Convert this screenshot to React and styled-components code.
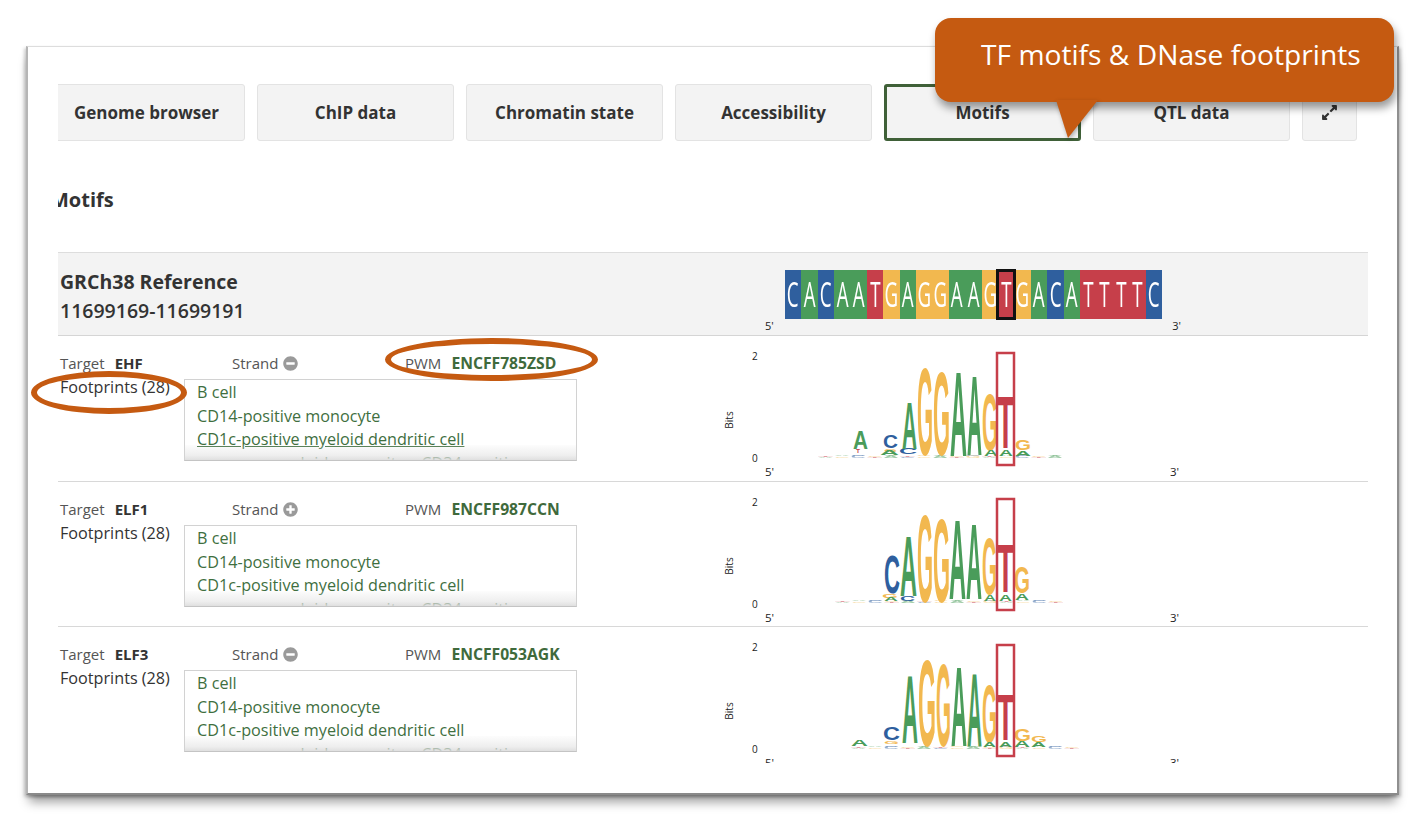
import React from "react";
import styled, { createGlobalStyle } from "styled-components";
import { FaExpandAlt, FaMinusCircle, FaPlusCircle } from "react-icons/fa";

const Global = createGlobalStyle`
  html, body { margin: 0; padding: 0; background: #fff; }
  body { font-family: "Open Sans", "Liberation Sans", sans-serif; color: #333; overflow: hidden; }
`;

const BASE = { A: "#4a9c5a", C: "#2f5f9e", G: "#f2b84f", T: "#c63f4a" };
const ADV = { A: 0.722, C: 0.722, G: 0.778, T: 0.611 };

const Page = styled.div`
  position: relative;
  width: 1425px;
  height: 825px;
  padding: 46px 0 0 26px;
  box-sizing: border-box;
`;
const Frame = styled.div`
  width: 1373px;
  height: 749px;
  box-sizing: border-box;
  background: #fff;
  padding: 0 29px 0 30px;
  border-top: 1px solid #ddd;
  border-left: 2px solid #b5b5b5;
  border-right: 2px solid #8f8f8f;
  border-bottom: 2px solid #8a8a8a;
  box-shadow: 0 10px 10px -3px rgba(0, 0, 0, 0.38), -2px 2px 3px rgba(0, 0, 0, 0.18), 2px 2px 3px rgba(0, 0, 0, 0.18);
`;
const Clip = styled.div`
  height: 716px;
  overflow: hidden;
`;
const Content = styled.div`
  margin-left: -10px;
  padding-top: 37px;
`;
const Tabs = styled.div`
  display: flex;
  gap: 12px;
`;
const Tab = styled.div`
  width: ${(p) => (p.$narrow ? "55px" : "197px")};
  height: 57px;
  box-sizing: border-box;
  display: flex;
  align-items: center;
  justify-content: center;
  background: #f3f3f3;
  border: ${(p) => (p.$active ? "3px solid #3f6038" : "1px solid #e3e3e3")};
  border-radius: 3px;
  font-size: 17px;
  font-weight: 700;
  color: #333;
  white-space: nowrap;
  svg { width: 17px; height: 17px; }
`;
const Heading = styled.h2`
  margin: 45px 0 0 2px;
  height: 66px;
  font-size: 20px;
  line-height: 27px;
  font-weight: 700;
  color: #333;
`;
const SeqHeader = styled.div`
  display: grid;
  grid-template-columns: 652px 1fr;
  height: 84px;
  box-sizing: border-box;
  background: #f3f3f3;
  border-top: 1px solid #ddd;
  border-bottom: 1px solid #d5d5d5;
`;
const Assembly = styled.div`
  padding: 14px 0 0 12px;
  font-size: 19.5px;
  line-height: 29px;
  font-weight: 700;
  color: #333;
  white-space: nowrap;
`;
const Coord = styled.div`
  font-weight: 600;
`;
const SeqArea = styled.div`
  padding: 17px 0 0 85px;
`;
const SeqStrip = styled.div`
  position: relative;
  display: flex;
  width: 377px;
  height: 49px;
`;
const Cell = styled.div`
  flex: 1;
  display: flex;
  align-items: center;
  justify-content: center;
  overflow: hidden;
  background: ${(p) => BASE[p.$base]};
  color: #fff;
  font-size: 34px;
  line-height: 49px;
`;
const CellLetter = styled.span`
  display: inline-block;
  transform: scaleX(0.55);
`;
const Marker = styled.div`
  position: absolute;
  left: 211px;
  top: -1px;
  width: 20px;
  height: 51px;
  box-sizing: border-box;
  border: 3px solid #111;
`;
const SeqEnds = styled.div`
  display: flex;
  justify-content: space-between;
  width: 416px;
  margin-left: -20px;
  font-size: 11px;
  line-height: 14px;
  color: #222;
`;
const Row = styled.div`
  display: grid;
  grid-template-columns: 652px 1fr;
  height: ${(p) => p.$height}px;
  box-sizing: border-box;
  border-bottom: 1px solid #d8d8d8;
`;
const Info = styled.div`
  padding: 15px 0 0 12px;
  font-size: 15px;
  line-height: 24px;
  color: #555;
`;
const Meta = styled.div`
  display: grid;
  grid-template-columns: 172px 173px auto;
  height: 28px;
`;
const MetaItem = styled.div`
  display: flex;
  align-items: flex-start;
  gap: 10px;
  svg { width: 15px; height: 15px; color: #9a9a9a; margin: 5px 0 0 -5px; }
`;
const Strong = styled.span`
  font-weight: 700;
  color: #333;
`;
const PwmLink = styled.span`
  font-weight: 700;
  font-size: 15.7px;
  color: #3f6a3c;
`;
const Footprints = styled.div`
  display: flex;
`;
const FootLabel = styled.div`
  width: 124px;
  margin-top: -4px;
  font-size: 16.2px;
  color: #333;
  white-space: nowrap;
`;
const FootBox = styled.div`
  position: relative;
  width: 393px;
  height: 82px;
  box-sizing: border-box;
  padding: 1.4px 0 0 12px;
  overflow: hidden;
  font-size: 16.2px;
  border: 1px solid #d2d2d2;
  border-bottom-color: #c4c4c4;
  &::after {
    content: "";
    position: absolute;
    left: 0;
    right: 0;
    bottom: 0;
    height: 15px;
    background: linear-gradient(to bottom, rgba(232, 232, 232, 0.1), rgba(224, 224, 224, 0.55) 70%, rgba(220, 220, 220, 0.9) 100%);
  }
`;
const FootItem = styled.div`
  line-height: 23.5px;
  white-space: nowrap;
  color: #3f6f3f;
  text-decoration: ${(p) => (p.$underline ? "underline" : "none")};
`;
const LogoSvg = styled.svg`
  display: block;
  overflow: visible;
`;
const Glyph = styled.text`
  font-family: "Liberation Sans", Arial, sans-serif;
  font-weight: 700;
  font-size: 100px;
  fill: ${(p) => BASE[p.$b]};
  opacity: ${(p) => (p.$faint ? 0.5 : 1)};
`;
const AxisText = styled.text`
  font-family: "Open Sans", sans-serif;
  font-size: ${(p) => p.$size}px;
  fill: #222;
`;
const Callout = styled.div`
  position: absolute;
  left: 935px;
  top: 18px;
  width: 459px;
  height: 84px;
  box-sizing: border-box;
  padding: 17px 0 0 46px;
  background: #c55a11;
  border-radius: 16px;
  color: #fff;
  font-size: 28.2px;
  line-height: 38px;
  white-space: nowrap;
  box-shadow: 2px 6px 8px rgba(0, 0, 0, 0.4);
`;
const Tail = styled.svg`
  position: absolute;
  left: 1050px;
  top: 100px;
  overflow: visible;
  filter: drop-shadow(1px 2px 2px rgba(0, 0, 0, 0.3));
`;
const Ring = styled.div`
  position: absolute;
  left: ${(p) => p.$x}px;
  top: ${(p) => p.$y}px;
  width: ${(p) => p.$w}px;
  height: ${(p) => p.$h}px;
  box-sizing: border-box;
  border: 6px solid #c55a11;
  border-radius: 50%;
`;

const SEQ = "CACAATGAGGAAGTGACATTTTC".split("");
const FOOT = ["B cell", "CD14-positive monocyte", "CD1c-positive myeloid dendritic cell", "common myeloid progenitor, CD34-positive"];

const L = (b, x0, x1, top, bottom, faint) => ({ b, x0, x1, top, bottom, faint });
const noise = (start, end, base) => {
  const out = [];
  const order = ["A", "G", "C", "T", "A", "C", "G", "A", "T", "G"];
  let i = 0;
  for (let x = start; x < end; x += 16.4) {
    const h = 1 + ((i * 7) % 5) * 0.3;
    out.push(L(order[i % 10], x, x + 15, base - h, base, true));
    out.push(L(order[(i + 3) % 10], x, x + 15, base - h - 1.5, base - h, true));
    i++;
  }
  return out;
};

const ROWS = [
  {
    target: "EHF", plus: false, pwm: "ENCFF785ZSD", top: 336, height: 146, underline: true,
    box: [353, 465],
    letters: [
      ...noise(818, 1060, 458),
      L("A", 853, 868, 431, 449), L("T", 856, 860, 449, 453),
      L("C", 883, 898, 435, 448), L("G", 884, 897, 449, 452), L("A", 880, 899, 450, 455),
      L("C", 899, 917, 448, 454), L("A", 902, 917, 401, 449),
      L("G", 917, 933, 366, 455), L("G", 933, 950, 370, 455),
      L("A", 950, 967, 369, 456), L("A", 967, 982, 374, 455), L("G", 982, 998, 393, 450),
      L("T", 997, 1014, 394, 448), L("A", 984, 998, 449, 456), L("A", 999, 1013, 449, 456),
      L("G", 1015, 1031, 439, 450), L("A", 1015, 1031, 451, 456),
    ],
  },
  {
    target: "ELF1", plus: true, pwm: "ENCFF987CCN", top: 482, height: 145, underline: false,
    box: [499, 610],
    letters: [
      ...noise(835, 1060, 603),
      L("C", 884, 900, 554, 593), L("G", 882, 898, 594, 598), L("A", 884, 898, 597, 601),
      L("A", 900, 917, 534, 596), L("C", 900, 915, 596, 601),
      L("G", 917, 933, 512, 602), L("G", 933, 950, 516, 602),
      L("A", 949, 966, 517, 599), L("A", 966, 982, 522, 599), L("G", 982, 997, 537, 594),
      L("T", 997, 1014, 542, 592), L("A", 984, 996, 595, 601), L("A", 999, 1012, 595, 601),
      L("G", 1014, 1030, 566, 593), L("A", 1015, 1029, 594, 600),
    ],
  },
  {
    target: "ELF3", plus: false, pwm: "ENCFF053AGK", top: 627, height: 145, underline: false,
    box: [645, 756],
    letters: [
      ...noise(851, 1080, 749),
      L("A", 851, 868, 740, 746), L("C", 883, 900, 727, 740), L("G", 884, 899, 741, 744),
      L("A", 902, 918, 674, 743),
      L("G", 918, 936, 658, 746), L("G", 936, 951, 662, 746),
      L("A", 951, 967, 665, 746), L("A", 967, 982, 671, 746), L("G", 982, 997, 683, 742),
      L("T", 997, 1014, 693, 740), L("A", 983, 996, 742, 747), L("A", 999, 1012, 742, 747),
      L("G", 1014, 1031, 729, 741), L("G", 1031, 1047, 735, 742), L("A", 1014, 1030, 741, 747), L("A", 1031, 1046, 742, 747),
    ],
  },
];

function SeqLogo({ row }) {
  const ox = 700;
  const oy = row.top;
  return (
    <LogoSvg width="500" height="144" viewBox="0 0 500 144">
      <AxisText $size={10} x={52} y={24}>2</AxisText>
      <AxisText $size={10} x={52} y={126}>0</AxisText>
      <AxisText $size={10} textAnchor="middle" transform="translate(33,84) rotate(-90)">Bits</AxisText>
      <AxisText $size={11.5} x={65} y={140}>5'</AxisText>
      <AxisText $size={11.5} x={470} y={140}>3'</AxisText>
      {row.letters.map((l, i) => {
        const sx = (l.x1 - l.x0) / (ADV[l.b] * 100);
        const sy = (l.bottom - l.top) / 72;
        return (
          <Glyph key={i} $b={l.b} $faint={l.faint} transform={`translate(${l.x0 - ox},${l.bottom - oy}) scale(${sx.toFixed(4)},${sy.toFixed(4)})`}>
            {l.b}
          </Glyph>
        );
      })}
      <rect x={297} y={row.box[0] - oy} width={17} height={row.box[1] - row.box[0]} fill="none" stroke="#c63f4a" strokeWidth="2.5" />
    </LogoSvg>
  );
}

export default function App() {
  return (
    <Page>
      <Global />
      <Frame>
        <Clip>
          <Content>
            <Tabs>
              <Tab>Genome browser</Tab>
              <Tab>ChIP data</Tab>
              <Tab>Chromatin state</Tab>
              <Tab>Accessibility</Tab>
              <Tab $active>Motifs</Tab>
              <Tab>QTL data</Tab>
              <Tab $narrow><FaExpandAlt /></Tab>
            </Tabs>
            <Heading>Motifs</Heading>
            <SeqHeader>
              <Assembly>
                GRCh38 Reference
                <Coord>11699169-11699191</Coord>
              </Assembly>
              <SeqArea>
                <SeqStrip>
                  {SEQ.map((b, i) => (
                    <Cell key={i} $base={b}><CellLetter>{b}</CellLetter></Cell>
                  ))}
                  <Marker />
                </SeqStrip>
                <SeqEnds><span>5'</span><span>3'</span></SeqEnds>
              </SeqArea>
            </SeqHeader>
            {ROWS.map((row) => (
              <Row key={row.target} $height={row.height}>
                <Info>
                  <Meta>
                    <MetaItem>Target <Strong>{row.target}</Strong></MetaItem>
                    <MetaItem>Strand {row.plus ? <FaPlusCircle /> : <FaMinusCircle />}</MetaItem>
                    <MetaItem>PWM <PwmLink>{row.pwm}</PwmLink></MetaItem>
                  </Meta>
                  <Footprints>
                    <FootLabel>Footprints (28)</FootLabel>
                    <FootBox>
                      {FOOT.map((f, i) => (
                        <FootItem key={f} $underline={row.underline && i === 2}>{f}</FootItem>
                      ))}
                    </FootBox>
                  </Footprints>
                </Info>
                <SeqLogo row={row} />
              </Row>
            ))}
          </Content>
        </Clip>
      </Frame>
      <Callout>TF motifs &amp; DNase footprints</Callout>
      <Tail width="50" height="40" viewBox="0 0 50 40">
        <path d="M6 0 L18 38 L48 0 Z" fill="#c55a11" />
      </Tail>
      <Ring $x={385} $y={338} $w={213} $h={43} />
      <Ring $x={31} $y={371} $w={156} $h={43} />
    </Page>
  );
}
